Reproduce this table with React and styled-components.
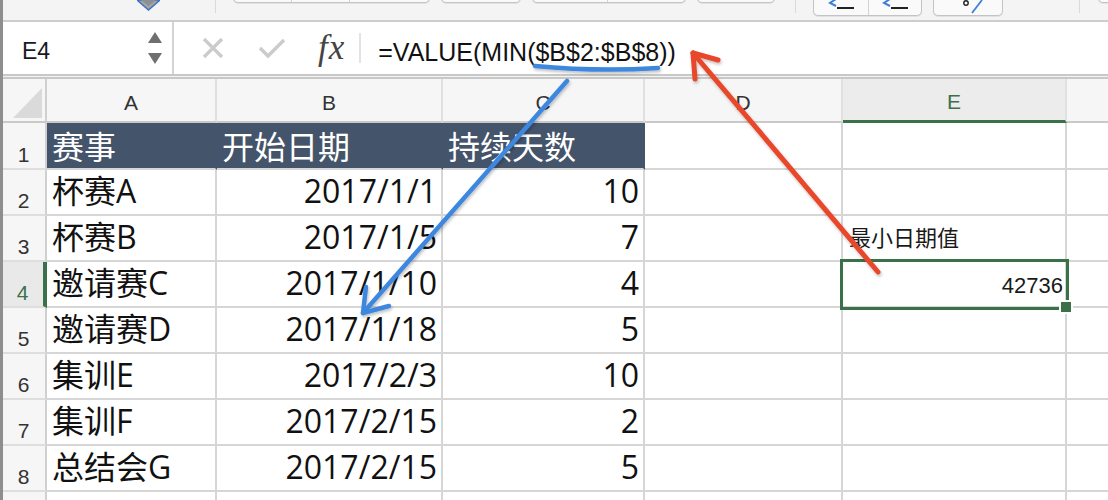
import React from "react";
import styled, { createGlobalStyle, css } from "styled-components";

const GREEN = "#3b7149";
const GRID = "#d6d6d6";

const GlobalStyle = createGlobalStyle`
  html, body { margin: 0; padding: 0; background: #fff; }
  body { font-family: "Liberation Sans", "Noto Sans CJK SC", sans-serif; }
`;

const columns = ["A", "B", "C", "D", "E", ""];
const header = ["赛事", "开始日期", "持续天数"];
const rows = [
  ["杯赛A", "2017/1/1", 10],
  ["杯赛B", "2017/1/5", 7],
  ["邀请赛C", "2017/1/10", 4],
  ["邀请赛D", "2017/1/18", 5],
  ["集训E", "2017/2/3", 10],
  ["集训F", "2017/2/15", 2],
  ["总结会G", "2017/2/15", 5],
];

const App = () => {
  return (
    <>
      <GlobalStyle />
      <Window>
        <Ribbon>
          <PaintIcon width="23" height="11" viewBox="0 0 23 11">
            <polygon points="0,0 23,0 11.5,10" fill="#a9a59a" stroke="#3d72c8" strokeWidth="1.5" />
            <polygon points="4,0 19,0 11.5,6" fill="#8b8f96" />
          </PaintIcon>
          <RibbonSep $gap={55} />
          <BtnGroup $gap={17}>
            <Segment $w={57} />
            <Segment $w={58} />
            <Segment $w={80} />
          </BtnGroup>
          <BtnGroup $gap={11}>
            <Segment $w={78} />
          </BtnGroup>
          <BtnGroup $gap={11}>
            <Segment $w={74} />
            <Segment $w={78} />
          </BtnGroup>
          <BtnGroup $gap={11}>
            <Segment $w={76} />
          </BtnGroup>
          <RibbonSep $gap={20} />
          <BtnGroup $gap={17} $tall>
            <Segment $w={54}>
              <IndentIcon />
            </Segment>
            <Segment $w={53}>
              <IndentIcon />
            </Segment>
          </BtnGroup>
          <BtnGroup $gap={11} $tall>
            <Segment $w={68}>
              <svg width="30" height="16" viewBox="0 0 30 16">
                <circle cx="13" cy="5" r="2.2" fill="none" stroke="#222" strokeWidth="1.4" />
                <line x1="29" y1="2" x2="19" y2="15" stroke="#3f7fd8" strokeWidth="1.8" />
              </svg>
            </Segment>
          </BtnGroup>
          <RibbonSep $gap={76} />
          <BtnGroup $gap={18}>
            <Segment $w={60} />
          </BtnGroup>
        </Ribbon>

        <FormulaBar>
          <NameBox>
            <NameText>E4</NameText>
            <svg width="14" height="32" viewBox="0 0 14 32">
              <polygon points="7,0 14,11 0,11" fill="#6f6f6f" />
              <polygon points="0,21 14,21 7,32" fill="#6f6f6f" />
            </svg>
          </NameBox>
          <FxTools>
            <svg width="22" height="22" viewBox="0 0 22 22">
              <path d="M2 2 L20 20 M20 2 L2 20" stroke="#cbcbcb" strokeWidth="3.2" />
            </svg>
            <svg width="28" height="22" viewBox="0 0 28 22">
              <path d="M2 11 L10 19 L26 3" fill="none" stroke="#cbcbcb" strokeWidth="3.4" />
            </svg>
            <FxLabel>fx</FxLabel>
            <BarSep />
          </FxTools>
          <FormulaInput>=VALUE(MIN($B$2:$B$8))</FormulaInput>
        </FormulaBar>
        <Divider />

        <Sheet>
          <Corner>
            <CornerMark />
          </Corner>
          {columns.map((c, i) => (
            <ColHead key={i} $active={c === "E"} $last={i === columns.length - 1}>
              {c}
            </ColHead>
          ))}

          <RowHead>1</RowHead>
          {header.map((h) => (
            <Cell key={h} $dark>
              {h}
            </Cell>
          ))}
          <Cell />
          <Cell />
          <Cell $last />

          {rows.map((r, i) => {
            const n = i + 2;
            return (
              <React.Fragment key={n}>
                <RowHead $active={n === 4}>{n}</RowHead>
                <Cell>{r[0]}</Cell>
                <Cell $align="right">{r[1]}</Cell>
                <Cell $align="right">{r[2]}</Cell>
                <Cell />
                {n === 3 && <Cell $small>最小日期值</Cell>}
                {n === 4 && (
                  <Cell $small $align="right" $selected>
                    42736
                    <SelectionFrame>
                      <FillHandle />
                    </SelectionFrame>
                  </Cell>
                )}
                {n !== 3 && n !== 4 && <Cell />}
                <Cell $last />
              </React.Fragment>
            );
          })}

          <RowHead />
          {columns.map((c, i) => (
            <Cell key={i} $last={i === columns.length - 1} />
          ))}
        </Sheet>

        <Annotations width="1108" height="500" viewBox="0 0 1108 500">
          <defs>
            <filter id="shade" x="-10%" y="-10%" width="120%" height="120%">
              <feDropShadow dx="1" dy="2" stdDeviation="1.5" floodColor="#000" floodOpacity="0.25" />
            </filter>
          </defs>
          <g filter="url(#shade)" fill="none" strokeLinecap="round" strokeLinejoin="round">
            <path d="M535 66 Q598 72 658 68" stroke="#3e87df" strokeWidth="4.5" />
            <path d="M567 81 L363 313" stroke="#3e87df" strokeWidth="4.5" />
            <path d="M389 306 L363 313 L366 287" stroke="#3e87df" strokeWidth="4.5" />
            <path d="M878 272 L693 53" stroke="#e9472c" strokeWidth="5" />
            <path d="M718 60 L693 53 L695 79" stroke="#e9472c" strokeWidth="5" />
          </g>
        </Annotations>
      </Window>
    </>
  );
};

const IndentIcon = () => (
  <svg width="30" height="14" viewBox="0 0 30 14">
    <path d="M10 1 L4 5 L10 8" fill="none" stroke="#3f7fd8" strokeWidth="2" />
    <line x1="11" y1="10" x2="28" y2="10" stroke="#222" strokeWidth="2" />
  </svg>
);

const Window = styled.div`
  position: relative;
  box-sizing: border-box;
  width: 1108px;
  height: 500px;
  overflow: hidden;
  background: #fff;
  border-left: 3px solid #8e8e8e;
`;

const Ribbon = styled.div`
  display: flex;
  align-items: flex-start;
  height: 20px;
  background: #f4f4f4;
  border-bottom: 2px solid #cdcdcd;
  overflow: hidden;
`;

const PaintIcon = styled.svg`
  flex: none;
  margin-left: 134px;
`;

const RibbonSep = styled.div`
  flex: none;
  width: 1px;
  height: 13px;
  margin-left: ${(p) => p.$gap}px;
  background: #dadada;
`;

const BtnGroup = styled.div`
  flex: none;
  display: flex;
  margin-left: ${(p) => p.$gap}px;
  margin-top: ${(p) => (p.$tall ? -6 : -10)}px;
  height: ${(p) => (p.$tall ? 22 : 13)}px;
  box-sizing: border-box;
  border: 1px solid #c4c4c4;
  border-radius: 5px;
  background: #fafafa;
  box-shadow: 0 1px 0 #e2e2e2;
  overflow: hidden;
`;

const Segment = styled.div`
  width: ${(p) => p.$w}px;
  display: flex;
  justify-content: center;
  align-items: flex-start;
  padding-top: 3px;
  box-sizing: border-box;
  & + & {
    border-left: 1px solid #d2d2d2;
  }
`;

const FormulaBar = styled.div`
  display: flex;
  align-items: center;
  height: 52px;
  background: #fff;
`;

const NameBox = styled.div`
  flex: none;
  box-sizing: border-box;
  width: 171px;
  height: 100%;
  display: flex;
  align-items: center;
  padding: 0 10px 0 19px;
  border-right: 2px solid #d4d4d4;
`;

const NameText = styled.span`
  flex: 1;
  margin-top: 6px;
  font-family: "Liberation Sans", sans-serif;
  font-size: 23px;
  line-height: 23px;
  color: #1a1a1a;
`;

const FxTools = styled.div`
  display: flex;
  align-items: center;
  gap: 34px;
  padding-left: 28px;
`;

const FxLabel = styled.span`
  margin-left: -2px;
  font-family: "Liberation Serif", serif;
  font-style: italic;
  font-size: 35px;
  line-height: 34px;
  letter-spacing: 1px;
  color: #444;
`;

const BarSep = styled.div`
  width: 2px;
  height: 30px;
  margin-left: -20px;
  background: #e3e3e3;
`;

const FormulaInput = styled.div`
  margin-left: 17px;
  margin-top: 8px;
  font-family: "Liberation Sans", sans-serif;
  font-size: 25px;
  line-height: 25px;
  color: #111;
  white-space: nowrap;
`;

const Divider = styled.div`
  height: 1px;
  background: #f3f3f3;
  border-top: 2px solid #c8c8c8;
  border-bottom: 2px solid #c8c8c8;
`;

const Sheet = styled.div`
  display: grid;
  grid-template-columns: 44px 170px 226px 202px 198px 224px 1fr;
  grid-template-rows: 44px 47px repeat(8, 46px);
`;

const Corner = styled.div`
  position: relative;
  box-sizing: border-box;
  background: #f6f6f6;
  border-right: 2px solid #d0d0d0;
  border-bottom: 2px solid #c9c9c9;
`;

const CornerMark = styled.div`
  position: absolute;
  right: 3px;
  bottom: 3px;
  width: 29px;
  height: 30px;
  background: #dadada;
  clip-path: polygon(100% 0, 100% 100%, 0 100%);
`;

const ColHead = styled.div`
  box-sizing: border-box;
  display: flex;
  align-items: flex-end;
  justify-content: center;
  padding-bottom: 8px;
  background: ${(p) => (p.$active ? "#ececec" : "#f6f6f6")};
  border-right: ${(p) => (p.$last ? "none" : "2px solid #e0e0e0")};
  border-bottom: ${(p) => (p.$active ? `3px solid ${GREEN}` : "2px solid #c9c9c9")};
  font-family: "Liberation Sans", sans-serif;
  font-size: 21px;
  line-height: 21px;
  color: ${(p) => (p.$active ? GREEN : "#333")};
`;

const RowHead = styled.div`
  box-sizing: border-box;
  display: flex;
  align-items: flex-end;
  justify-content: center;
  padding: 0 1px 3px 0;
  background: ${(p) => (p.$active ? "#e9e9e9" : "#f6f6f6")};
  border-right: ${(p) => (p.$active ? `4px solid ${GREEN}` : "2px solid #d0d0d0")};
  border-bottom: 2px solid #dedede;
  font-family: "Liberation Sans", sans-serif;
  font-size: 21px;
  line-height: 21px;
  color: ${(p) => (p.$active ? GREEN : "#333")};
`;

const Cell = styled.div`
  position: relative;
  box-sizing: border-box;
  display: flex;
  align-items: flex-end;
  justify-content: ${(p) => (p.$align === "right" ? "flex-end" : "flex-start")};
  padding: 0 4px 7px 5px;
  border-right: ${(p) => (p.$last ? "none" : `2px solid ${GRID}`)};
  border-bottom: 2px solid ${GRID};
  font-family: "Open Sans", "Noto Sans CJK SC", sans-serif;
  font-size: 32px;
  line-height: 32px;
  color: #111;
  white-space: nowrap;

  ${(p) =>
    p.$dark &&
    css`
      background: #44546a;
      border-right-color: #44546a;
      color: #fff;
      padding-bottom: 5px;
    `}

  ${(p) =>
    p.$small &&
    css`
      font-family: "Liberation Sans", "Noto Sans CJK SC", sans-serif;
      font-size: 22px;
      line-height: 22px;
      color: #1a1a1a;
      padding: 0 2px 10px 6px;
    `}

  ${(p) =>
    p.$selected &&
    css`
      z-index: 2;
      padding-bottom: 9px;
    `}
`;

const SelectionFrame = styled.div`
  position: absolute;
  left: -3px;
  top: -3px;
  width: 229px;
  height: 51px;
  box-sizing: border-box;
  border: 3px solid ${GREEN};
  pointer-events: none;
`;

const FillHandle = styled.div`
  position: absolute;
  right: -7px;
  bottom: -7px;
  width: 10px;
  height: 10px;
  background: ${GREEN};
  border: 2px solid #fff;
`;

const Annotations = styled.svg`
  position: absolute;
  left: -3px;
  top: 0;
  pointer-events: none;
  z-index: 5;
`;

export default App;
